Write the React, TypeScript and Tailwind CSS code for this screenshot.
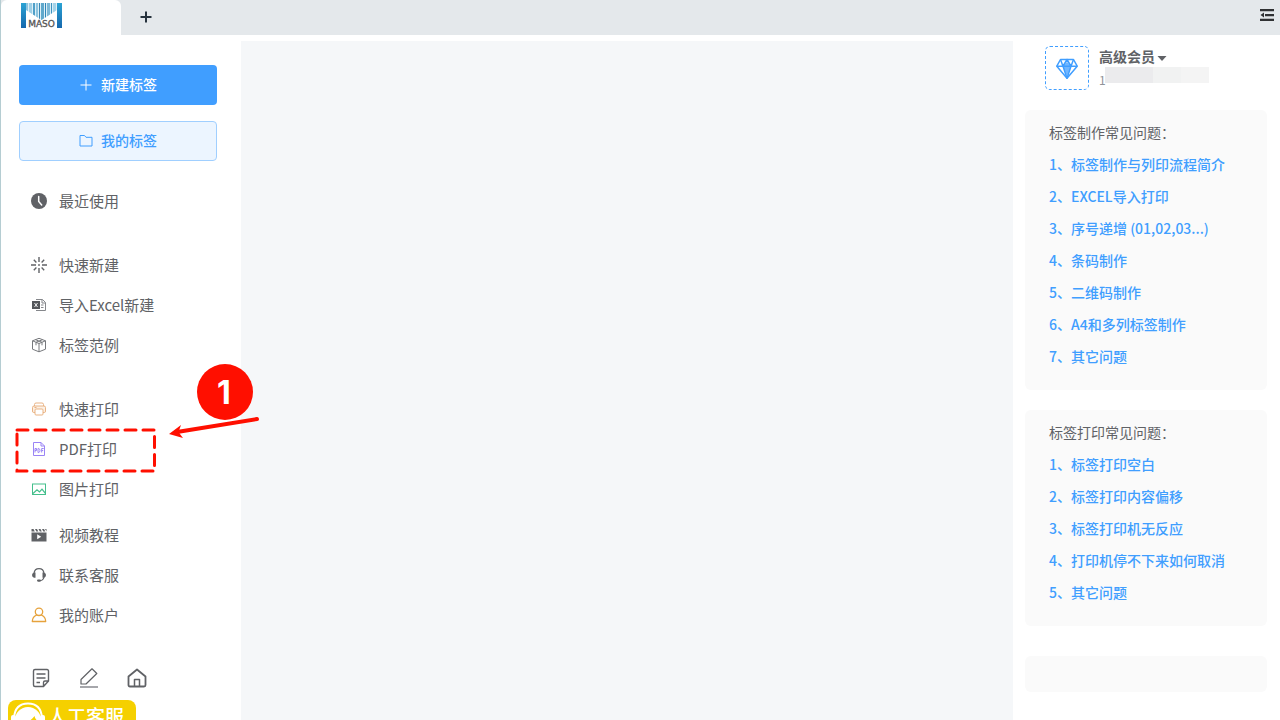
import React, { ReactNode } from 'react'

interface IconProps {
  className?: string
}

interface MenuItem {
  label: string
  icon: ReactNode
}

interface HelpSection {
  title: string
  links: string[]
}

function Logo() {
  const bars = [
    { x: 5, w: 2, c: '#8cc4df' },
    { x: 8, w: 3, c: '#9fcfe6' },
    { x: 12, w: 2, c: '#4f9fc8' },
    { x: 15, w: 2, c: '#8cc4df' },
    { x: 18, w: 1, c: '#3a88b4' },
    { x: 20, w: 3, c: '#5fa8cc' },
    { x: 24, w: 1, c: '#2f86b8' },
    { x: 26, w: 3, c: '#7cb8d6' },
    { x: 30, w: 1, c: '#3f93c0' },
    { x: 32, w: 3, c: '#a5d3e8' },
  ]
  return (
    <svg className="w-[41px] h-[25px]" viewBox="0 0 41 25" role="img" aria-label="MASO">
      <defs>
        <linearGradient id="logoSide" x1="0" y1="0" x2="0" y2="1">
          <stop offset="0" stopColor="#2ba3d4" />
          <stop offset="1" stopColor="#1668ad" />
        </linearGradient>
        <clipPath id="logoBars">
          <path d="M5 0h31v7L20.500 17 5 7z" />
        </clipPath>
      </defs>
      <path d="M5 0h31v7L20.500 17 5 7z" fill="#dceff7" />
      <g clipPath="url(#logoBars)">
        {bars.map(bar => (
          <rect key={bar.x} x={bar.x} y="0" width={bar.w} height="18" fill={bar.c} />
        ))}
      </g>
      <rect x="0" y="0" width="5" height="25" fill="url(#logoSide)" />
      <rect x="36" y="0" width="5" height="25" fill="url(#logoSide)" />
      <text x="20.500" y="24" textAnchor="middle" fontFamily="DejaVu Sans, sans-serif" fontSize="9" fill="#555" stroke="#555" strokeWidth="0.300">
        MASO
      </text>
    </svg>
  )
}

function PlusIcon({ className }: IconProps) {
  return (
    <svg className={className} viewBox="0 0 12 12" fill="none" stroke="currentColor" aria-hidden="true">
      <path d="M6 0.500v11M0.500 6h11" />
    </svg>
  )
}

function FolderIcon({ className }: IconProps) {
  return (
    <svg className={className} viewBox="0 0 14 14" fill="none" stroke="currentColor" aria-hidden="true">
      <path d="M1 2.500h4.500l1.500 1.800h6v8.700H1z" />
    </svg>
  )
}

function ClockIcon() {
  return (
    <svg className="w-4 h-4" viewBox="0 0 16 16" aria-hidden="true">
      <circle cx="8" cy="8" r="8" fill="#606266" />
      <path d="M7.700 3.500v5l3 3.500" fill="none" stroke="#fff" strokeWidth="1.500" strokeLinecap="round" />
    </svg>
  )
}

function SparkIcon() {
  return (
    <svg className="w-4 h-4" viewBox="0 0 16 16" fill="none" stroke="#606266" strokeWidth="1.400" aria-hidden="true">
      <path d="M8 0v5M8 11v5M0 8h5M11 8h5M2.800 2.800l2.600 2.600M10.600 10.600l2.600 2.600M13.200 2.800l-2.600 2.600M5.400 10.600l-2.600 2.600" />
      <circle cx="8" cy="8" r="0.900" fill="#606266" stroke="none" />
    </svg>
  )
}

function ExcelIcon() {
  return (
    <svg className="w-4 h-4" viewBox="0 0 16 16" fill="none" aria-hidden="true">
      <path d="M5 2.500h6.500l3 3v8H5" stroke="#85878b" />
      <path d="M11 2.500v3.500h3.500" stroke="#85878b" />
      <path d="M10 8h2.500M10 10.500h2.500" stroke="#85878b" />
      <rect x="1" y="4" width="8" height="8" fill="#55575b" />
      <path d="M3.500 6l3 4M6.500 6l-3 4" stroke="#fff" strokeWidth="0.900" />
    </svg>
  )
}

function BoxIcon() {
  return (
    <svg className="w-4 h-4" viewBox="0 0 16 16" fill="none" stroke="#77797d" strokeLinejoin="round" aria-hidden="true">
      <path d="M8 1.300l6.500 2.500v8.400L8 14.800l-6.500-2.600V3.800z" />
      <path d="M1.500 3.800L8 6.500l6.500-2.700M8 6.500v8.300M4.500 2.700L11 5.300v3M11.500 2.700L5 5.300v3" />
    </svg>
  )
}

function PrinterIcon() {
  return (
    <svg className="w-4 h-4" viewBox="0 0 16 16" fill="none" stroke="#e9b384" strokeLinejoin="round" aria-hidden="true">
      <path d="M3.500 5V3.500Q3.500 2 5 2h6q1.500 0 1.500 1.500V5" />
      <path d="M4 11.500H2.500Q1.500 11.500 1.500 10V6.500Q1.500 5 3 5h10q1.500 0 1.500 1.500V10q0 1.500-1 1.500H12" fill="#fcf0e4" />
      <rect x="4" y="8" width="8" height="6" rx="1" fill="#fff" />
      <path d="M3.500 6.500h2" />
    </svg>
  )
}

function PdfIcon() {
  return (
    <svg className="w-4 h-4" viewBox="0 0 16 16" fill="none" stroke="#9a84f5" strokeLinejoin="round" aria-hidden="true">
      <path d="M2.500 1.500h7.500l3.500 3.500v9.500h-11z" />
      <path d="M10 1.500v3.500h3.500" />
      <path d="M4 11.500v-4h1.500v2H4M7 7.500v4h0.800q1.200-.5 1.200-2t-1.200-2zM10.700 11.500v-4h2M10.700 9.500h1.500" />
    </svg>
  )
}

function PictureIcon() {
  return (
    <svg className="w-4 h-4" viewBox="0 0 16 16" fill="none" stroke="#45bf8c" aria-hidden="true">
      <rect x="1.500" y="3" width="13" height="10.500" />
      <path d="M2 12.500l4-3.800 2.500 2.300 2.500-2.800 3.500 4.300" strokeWidth="1.200" />
    </svg>
  )
}

function VideoIcon() {
  return (
    <svg className="w-4 h-4" viewBox="0 0 16 16" aria-hidden="true">
      <path d="M0.500 5.500h15V14.500h-15z" fill="#606266" />
      <path d="M0.500 2h2l1.300 2.500H0.500zM4 2h2l1.300 2.500h-2zM7.500 2h2l1.300 2.500h-2zM11 2h2l1.300 2.500h-2zM14 2h1.500v2.500z" fill="#606266" />
      <path d="M6.200 7.200v5l4-2.500z" fill="#fff" />
    </svg>
  )
}

function HeadsetIcon() {
  return (
    <svg className="w-4 h-4" viewBox="0 0 16 16" fill="none" aria-hidden="true">
      <path d="M3 6.500Q3.500 1.700 8 1.700t5 4.800M13 10q-.7 3.500-4 3.700" stroke="#606266" strokeWidth="1.200" />
      <path d="M4.500 5.500v5.200H3Q1 10 1 8t2-2.500zM11.500 5.500v5.200H13q2-.7 2-2.700t-2-2.500z" fill="#606266" />
      <rect x="6" y="12.500" width="4" height="2.200" rx="1.100" fill="#606266" />
    </svg>
  )
}

function UserIcon() {
  return (
    <svg className="w-4 h-4" viewBox="0 0 16 16" fill="none" stroke="#e6a23c" strokeWidth="1.300" aria-hidden="true">
      <circle cx="8" cy="4.800" r="3.700" />
      <path d="M5.800 8Q1.500 9.500 1.300 14.500h13.400Q14.500 9.500 10.200 8" strokeLinejoin="round" />
    </svg>
  )
}

function NoteIcon() {
  return (
    <svg className="w-5 h-5" viewBox="0 0 20 20" fill="none" stroke="#606266" strokeWidth="1.400" aria-hidden="true">
      <path d="M17.500 13V3q0-1.500-1.500-1.500H4Q2.500 1.500 2.500 3v14q0 1.500 1.500 1.500h8.500zM17.500 13H14q-1.500 0-1.500 1.500v4" strokeLinejoin="round" />
      <path d="M5.500 6h9M5.500 10h9M5.500 14.500h3.500" />
    </svg>
  )
}

function EditIcon() {
  return (
    <svg className="w-5 h-5" viewBox="0 0 20 20" fill="none" stroke="#606266" strokeWidth="1.200" aria-hidden="true">
      <path d="M13 0.800L17.800 5.500 7 16H2v-4.500z" strokeLinejoin="round" />
      <path d="M1 19h18" stroke="#909296" strokeWidth="1.600" />
    </svg>
  )
}

function HomeIcon() {
  return (
    <svg className="w-5 h-5" viewBox="0 0 20 20" fill="none" stroke="#606266" strokeWidth="1.800" strokeLinejoin="round" aria-hidden="true">
      <path d="M1.500 8.500L10 1.500l8.500 7v8.500q0 1.500-1.500 1.500H3q-1.500 0-1.500-1.500z" />
      <path d="M7.500 18.500v-7h5v7" strokeWidth="1.500" />
    </svg>
  )
}

function CollapseIcon() {
  return (
    <svg className="w-[14px] h-3" viewBox="0 0 14 12" fill="#303133" aria-hidden="true">
      <path d="M0 0h14v2.300H0zM5 5h9v2.300H5zM0 9.700h14V12H0zM0.500 6L4 3.500v5z" />
    </svg>
  )
}

function DiamondIcon() {
  return (
    <svg className="mt-0.5 w-[22px] h-[22px]" viewBox="0 0 22 22" fill="none" stroke="#409eff" strokeWidth="1.500" strokeLinejoin="round" aria-hidden="true">
      <path d="M4.500 1.500h13L21.200 8.200 11 20.200.800 8.200z" />
      <path d="M0.800 8.200h20.400M4.500 1.500L7 8.200l4-6.700 4 6.700 2.500-6.700M7 8.200l4 12 4-12" />
      <path d="M6.500 7.500L11 4l4.500 3.500-4.500 11z" fill="#409eff" fillOpacity="0.750" stroke="none" />
    </svg>
  )
}

function AgentIcon() {
  return (
    <svg className="w-9 h-9" viewBox="0 0 36 36" fill="none" aria-hidden="true">
      <path d="M4 18Q5 3.500 18 3.500T32 18" stroke="#fff" strokeWidth="2" />
      <circle cx="18" cy="20" r="13" fill="#fff" />
      <path d="M16 22q5-1 8.500-6 .5 3.500 3.500 5-1 8-10 9-7-1-8-6 3 0 6-2z" fill="#f5d000" />
      <rect x="1" y="15" width="5" height="11" rx="2" fill="#fff" />
      <rect x="30" y="15" width="5" height="11" rx="2" fill="#fff" />
    </svg>
  )
}

const menuGroups: { className: string; items: MenuItem[] }[] = [
  {
    className: 'mt-5',
    items: [{ label: '最近使用', icon: <ClockIcon /> }],
  },
  {
    className: 'mt-6',
    items: [
      { label: '快速新建', icon: <SparkIcon /> },
      { label: '导入Excel新建', icon: <ExcelIcon /> },
      { label: '标签范例', icon: <BoxIcon /> },
    ],
  },
  {
    className: 'mt-6',
    items: [
      { label: '快速打印', icon: <PrinterIcon /> },
      { label: 'PDF打印', icon: <PdfIcon /> },
      { label: '图片打印', icon: <PictureIcon /> },
    ],
  },
  {
    className: 'mt-1.5',
    items: [
      { label: '视频教程', icon: <VideoIcon /> },
      { label: '联系客服', icon: <HeadsetIcon /> },
      { label: '我的账户', icon: <UserIcon /> },
    ],
  },
]

const helpSections: HelpSection[] = [
  {
    title: '标签制作常见问题：',
    links: [
      '1、标签制作与列印流程简介',
      '2、EXCEL导入打印',
      '3、序号递增 (01,02,03...)',
      '4、条码制作',
      '5、二维码制作',
      '6、A4和多列标签制作',
      '7、其它问题',
    ],
  },
  {
    title: '标签打印常见问题：',
    links: [
      '1、标签打印空白',
      '2、标签打印内容偏移',
      '3、标签打印机无反应',
      '4、打印机停不下来如何取消',
      '5、其它问题',
    ],
  },
]

/**
 * 顶部标签栏
 */
function TabBar() {
  return (
    <header className="flex h-[35px] shrink-0 items-stretch bg-[#e4e8eb]">
      <div className="w-[120px] rounded-t-md bg-white pl-5 pt-[3px]">
        <Logo />
      </div>
      <button type="button" aria-label="新建标签页" className="flex w-[50px] items-center justify-center pb-0.5 text-[#26323d]">
        <PlusIcon className="w-3 h-3 stroke-2" />
      </button>
      <button type="button" aria-label="收起" className="ml-auto mr-1.5 mt-[9px] self-start">
        <CollapseIcon />
      </button>
    </header>
  )
}

/**
 * 左侧菜单
 */
function Sidebar() {
  return (
    <aside className="w-60 shrink-0 pt-[30px]">
      <div className="flex flex-col gap-4 pl-[18px] pr-6">
        <button type="button" className="flex h-10 items-center justify-center gap-2 rounded bg-[#409eff] pb-0.5 text-sm font-medium text-white">
          <PlusIcon className="mt-0.5 w-3.5 h-3.5 p-px" />
          新建标签
        </button>
        <button type="button" className="flex h-10 items-center justify-center gap-2 rounded border border-[#a0cfff] bg-[#ecf5ff] pb-0.5 text-sm font-medium text-[#409eff]">
          <FolderIcon className="w-3.5 h-3.5" />
          我的标签
        </button>
      </div>

      <nav>
        {menuGroups.map(group => (
          <ul key={group.items[0].label} className={group.className}>
            {group.items.map(item => (
              <li key={item.label}>
                <button type="button" className="flex h-10 w-full items-center gap-3 pl-[30px] text-[15px] text-[#606266]">
                  {item.icon}
                  {item.label}
                </button>
              </li>
            ))}
          </ul>
        ))}
      </nav>

      <div className="mt-[33px] flex gap-7 pl-[30px]">
        <button type="button" aria-label="便签"><NoteIcon /></button>
        <button type="button" aria-label="编辑"><EditIcon /></button>
        <button type="button" aria-label="主页"><HomeIcon /></button>
      </div>

      <button type="button" className="ml-[7px] mt-3 flex h-9 w-32 items-start gap-0.5 rounded-lg bg-[#f5d000] pl-0.5 text-[19px] font-medium text-white">
        <AgentIcon />
        <span className="pt-0.5 leading-7">人工客服</span>
      </button>
    </aside>
  )
}

/**
 * 右侧会员信息与常见问题
 */
function HelpPanel() {
  return (
    <aside className="w-[267px] shrink-0 pl-3 pr-[13px] pt-[11px]">
      <div className="flex gap-2.5 pl-5">
        <div className="flex h-11 w-11 items-center justify-center rounded-[5px] border border-dashed border-[#409eff]">
          <DiamondIcon />
        </div>
        <div>
          <button type="button" className="flex h-[21px] items-center gap-0.5 pb-0.5 text-sm font-bold text-[#606266]">
            高级会员
            <svg className="mt-1.5 h-[5px] w-[10px]" viewBox="0 0 10 5" fill="currentColor" aria-hidden="true">
              <path d="M0.500 0h9L5 5z" />
            </svg>
          </button>
          <div className="flex text-xs text-[#909399]">
            <span className="w-1.5 pt-[5px]">1</span>
            <span className="h-4 w-12 bg-[#ebebed]" />
            <span className="h-4 w-7 bg-[#f1f2f2]" />
            <span className="h-4 w-7 bg-[#f4f4f4]" />
          </div>
        </div>
      </div>

      <div className="mt-5 flex flex-col gap-5">
        {helpSections.map(section => (
          <section key={section.title} className="rounded-md bg-[#fafafa] px-6 pb-[18px] pt-1.5 text-sm">
            <h2 className="leading-8 text-[#606266]">{section.title}</h2>
            <ul>
              {section.links.map(link => (
                <li key={link} className="leading-8">
                  <a href="#" className="font-medium text-[#409eff]">{link}</a>
                </li>
              ))}
            </ul>
          </section>
        ))}
      </div>
      <div className="mt-[30px] h-9 rounded-md bg-[#fafafa]" />
    </aside>
  )
}

/**
 * 步骤标注：虚线框、箭头和序号
 */
function StepMarker() {
  return (
    <svg className="pointer-events-none absolute left-0 top-[360px] h-[120px] w-[270px]" viewBox="1 0 270 120" fill="none" aria-hidden="true">
      <path
        d="M17 70H154.500V111H17z"
        stroke="#ff0f00"
        strokeWidth="3"
        strokeLinecap="round"
        strokeDasharray="11 7"
      />
      <path d="M257 59L177 72" stroke="#ff0f00" strokeWidth="4" strokeLinecap="round" />
      <path d="M169 74L181 65l-2.500 7 4.500 6z" fill="#ff0f00" />
      <circle cx="225" cy="32" r="28" fill="#ff0f00" />
      <text x="224" y="44" textAnchor="middle" fontFamily="Inter, sans-serif" fontSize="32" fontWeight="700" fill="#fff">
        1
      </text>
    </svg>
  )
}

export default function App() {
  return (
    <div className="relative flex h-screen flex-col overflow-hidden border-l border-[#b5cdd2] bg-white font-['Noto_Sans_CJK_SC',sans-serif]">
      <TabBar />
      <div className="flex min-h-0 flex-1">
        <Sidebar />
        <main className="mt-1.5 min-w-0 flex-1 bg-[#f5f7f9]" />
        <HelpPanel />
      </div>
      <StepMarker />
    </div>
  )
}
